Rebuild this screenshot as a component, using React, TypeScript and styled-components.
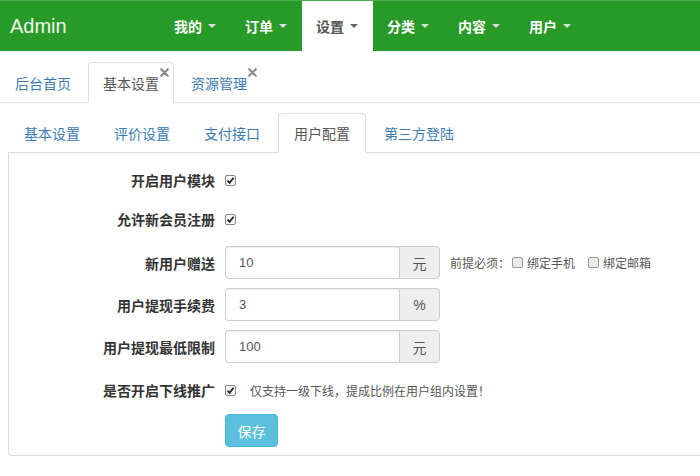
import React from "react";
import styled, { createGlobalStyle } from "styled-components";

const Global = createGlobalStyle`
  html, body { margin: 0; padding: 0; background: #fff; overflow: hidden; }
  body { font-family: "Liberation Sans", "Noto Sans CJK SC", sans-serif; font-size: 14px; color: #333; width: 700px; }
`;

const NavBar = styled.div`
  height: 51px;
  background: #289a28;
  display: flex;
  align-items: stretch;
  border-top: 1px solid #4cae4c;
  box-sizing: border-box;
`;

const Brand = styled.div`
  width: 160px;
  padding-left: 10px;
  box-sizing: border-box;
  display: flex;
  align-items: center;
  font-size: 20px;
  color: #eef6ee;
`;

const NavItem = styled.div<{ $active?: boolean }>`
  width: 71px;
  padding-left: 14px;
  box-sizing: border-box;
  display: flex;
  align-items: center;
  gap: 6px;
  font-weight: bold;
  font-size: 14px;
  color: ${(p) => (p.$active ? "#555" : "#fff")};
  background: ${(p) => (p.$active ? "#fff" : "transparent")};
`;

const Caret = styled.span<{ $dark?: boolean }>`
  width: 0;
  height: 0;
  border-left: 4px solid transparent;
  border-right: 4px solid transparent;
  border-top: 4px solid ${(p) => (p.$dark ? "#666" : "#ddd")};
`;

const TopTabs = styled.div`
  display: flex;
  align-items: flex-end;
  height: 52px;
  border-bottom: 1px solid #ddd;
  box-sizing: border-box;
`;

const TopTab = styled.div<{ $active?: boolean }>`
  position: relative;
  height: 41px;
  margin-bottom: -1px;
  margin-right: 2px;
  padding: 0 14px;
  display: flex;
  align-items: center;
  box-sizing: border-box;
  border: 1px solid ${(p) => (p.$active ? "#ddd" : "transparent")};
  border-bottom-color: ${(p) => (p.$active ? "#fff" : "transparent")};
  border-radius: 4px 4px 0 0;
  background: ${(p) => (p.$active ? "#fff" : "transparent")};
  color: ${(p) => (p.$active ? "#555" : "#3a7bb5")};
`;

const Close = styled.svg`
  position: absolute;
  top: 5px;
  right: 4px;
`;

const CloseIcon = () => (
  <Close width="9" height="9" viewBox="0 0 9 9">
    <path d="M1.2 1.2 L7.8 7.8 M7.8 1.2 L1.2 7.8" stroke="#8a8a8a" strokeWidth="2.2" strokeLinecap="round" />
  </Close>
);

const Section = styled.div`
  margin-left: 8px;
  margin-top: 9px;
`;

const SubTabs = styled.div`
  display: flex;
  border-bottom: 1px solid #ddd;
  height: 40px;
  align-items: flex-end;
`;

const SubTab = styled.div<{ $active?: boolean }>`
  height: 40px;
  margin-bottom: -1px;
  margin-right: 2px;
  padding: 0 15px;
  display: flex;
  align-items: center;
  box-sizing: border-box;
  border: 1px solid ${(p) => (p.$active ? "#ddd" : "transparent")};
  border-bottom-color: ${(p) => (p.$active ? "#fff" : "transparent")};
  border-radius: 4px 4px 0 0;
  background: ${(p) => (p.$active ? "#fff" : "transparent")};
  color: ${(p) => (p.$active ? "#555" : "#3a7bb5")};
`;

const Panel = styled.div`
  border: 1px solid #ddd;
  border-top: none;
  border-right: none;
  border-radius: 0 0 0 4px;
  padding: 17px 0 8px 0;
  display: flex;
  flex-direction: column;
  box-shadow: 0 1px 1px rgba(0, 0, 0, 0.04);
`;

const Row = styled.div<{ $mt: number; $h: number }>`
  display: flex;
  align-items: center;
  margin-top: ${(p) => p.$mt}px;
  height: ${(p) => p.$h}px;
`;

const Label = styled.div`
  width: 216px;
  text-align: right;
  font-weight: bold;
  color: #333;
  padding-right: 10px;
  box-sizing: border-box;
  flex-shrink: 0;
`;

const Box = styled.span<{ $checked?: boolean }>`
  width: 11px;
  height: 11px;
  box-sizing: border-box;
  border: 1px solid ${(p) => (p.$checked ? "#888" : "#9a9a9a")};
  background: ${(p) => (p.$checked ? "#f4f4f4" : "#eaeaea")};
  border-radius: 2px;
  display: inline-flex;
  align-items: center;
  justify-content: center;
  flex-shrink: 0;
`;

const Check = ({ checked }: { checked?: boolean }) => (
  <Box $checked={checked}>
    {checked && (
      <svg width="9" height="9" viewBox="0 0 9 9">
        <path d="M1.5 4.6 L3.6 6.8 L7.6 1.8" fill="none" stroke="#222" strokeWidth="1.8" />
      </svg>
    )}
  </Box>
);

const InputGroup = styled.div`
  display: flex;
  width: 215px;
  height: 33px;
  box-sizing: border-box;
  flex-shrink: 0;
`;

const Field = styled.div`
  flex: 1;
  border: 1px solid #ccc;
  border-right: none;
  border-radius: 4px 0 0 4px;
  padding-left: 13px;
  display: flex;
  align-items: center;
  font-size: 13px;
  color: #555;
  box-shadow: inset 0 1px 1px rgba(0, 0, 0, 0.075);
`;

const Addon = styled.div`
  width: 39px;
  border: 1px solid #ccc;
  border-radius: 0 4px 4px 0;
  background: #eee;
  display: flex;
  align-items: center;
  justify-content: center;
  color: #555;
  font-size: 14px;
`;

const Hint = styled.div`
  display: flex;
  align-items: center;
  font-size: 12px;
  color: #555;
  margin-left: 10px;
  white-space: nowrap;
`;

const HintOption = styled.label<{ $ml: number }>`
  display: flex;
  align-items: center;
  gap: 4px;
  margin-left: ${(p) => p.$ml}px;
`;

const Note = styled.span`
  font-size: 12px;
  color: #555;
  margin-left: 14px;
`;

const SaveButton = styled.button`
  margin-left: 216px;
  width: 53px;
  height: 33px;
  border: 1px solid #46b8da;
  background: #5bc0de;
  color: #fff;
  border-radius: 4px;
  font-family: "Liberation Sans", "Noto Sans CJK SC", sans-serif;
  font-size: 14px;
  padding: 0;
`;

const CheckCell = styled.div`
  display: flex;
  align-items: center;
`;

const navItems = ["我的", "订单", "设置", "分类", "内容", "用户"];

export default function App() {
  return (
    <>
      <Global />
      <NavBar>
        <Brand>Admin</Brand>
        {navItems.map((n) => (
          <NavItem key={n} $active={n === "设置"}>
            {n}
            <Caret $dark={n === "设置"} />
          </NavItem>
        ))}
      </NavBar>
      <TopTabs>
        <TopTab>后台首页</TopTab>
        <TopTab $active>
          基本设置
          <CloseIcon />
        </TopTab>
        <TopTab>
          资源管理
          <CloseIcon />
        </TopTab>
      </TopTabs>
      <Section>
        <SubTabs>
          <SubTab>基本设置</SubTab>
          <SubTab>评价设置</SubTab>
          <SubTab>支付接口</SubTab>
          <SubTab $active>用户配置</SubTab>
          <SubTab>第三方登陆</SubTab>
        </SubTabs>
        <Panel>
          <Row $mt={0} $h={20}>
            <Label>开启用户模块</Label>
            <CheckCell>
              <Check checked />
            </CheckCell>
          </Row>
          <Row $mt={19} $h={20}>
            <Label>允许新会员注册</Label>
            <CheckCell>
              <Check checked />
            </CheckCell>
          </Row>
          <Row $mt={17} $h={33}>
            <Label>新用户赠送</Label>
            <InputGroup>
              <Field>10</Field>
              <Addon>元</Addon>
            </InputGroup>
            <Hint>
              前提必须：
              <HintOption $ml={2}>
                <Check />绑定手机
              </HintOption>
              <HintOption $ml={13}>
                <Check />绑定邮箱
              </HintOption>
            </Hint>
          </Row>
          <Row $mt={9} $h={33}>
            <Label>用户提现手续费</Label>
            <InputGroup>
              <Field>3</Field>
              <Addon>%</Addon>
            </InputGroup>
          </Row>
          <Row $mt={9} $h={33}>
            <Label>用户提现最低限制</Label>
            <InputGroup>
              <Field>100</Field>
              <Addon>元</Addon>
            </InputGroup>
          </Row>
          <Row $mt={17} $h={20}>
            <Label>是否开启下线推广</Label>
            <CheckCell>
              <Check checked />
            </CheckCell>
            <Note>仅支持一级下线，提成比例在用户组内设置！</Note>
          </Row>
          <Row $mt={14} $h={33}>
            <SaveButton>保存</SaveButton>
          </Row>
        </Panel>
      </Section>
    </>
  );
}
